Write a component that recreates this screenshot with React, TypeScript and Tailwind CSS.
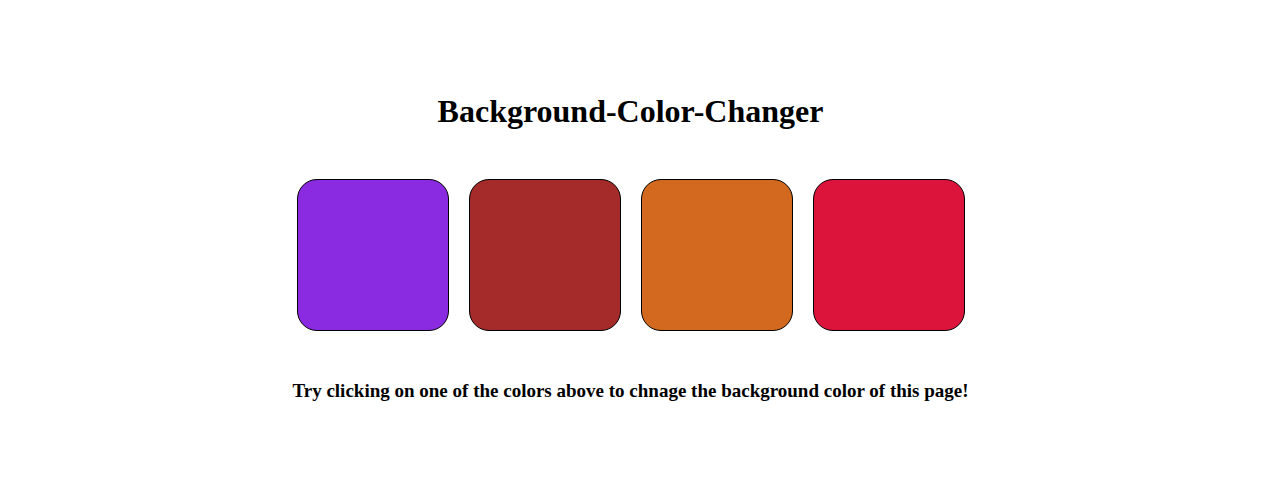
import { useState } from "react";

const swatches = [
  { name: "Blue violet", value: "#8a2be2", className: "bg-[#8a2be2]" },
  { name: "Brown", value: "#a52a2a", className: "bg-[#a52a2a]" },
  { name: "Chocolate", value: "#d2691e", className: "bg-[#d2691e]" },
  { name: "Crimson", value: "#dc143c", className: "bg-[#dc143c]" },
];

export default function App() {
  const [background, setBackground] = useState("#ffffff");

  return (
    <main
      className="flex min-h-screen flex-col items-center justify-center text-center font-['Liberation_Serif',serif] font-bold text-black"
      style={{ backgroundColor: background }}
    >
      <h1 className="text-[32px] leading-9">Background-Color-Changer</h1>
      <div className="mt-[50px] mb-12 flex flex-wrap justify-center gap-5">
        {swatches.map((swatch) => (
          <button
            key={swatch.value}
            type="button"
            aria-label={swatch.name}
            onClick={() => setBackground(swatch.value)}
            className={`size-[152px] cursor-pointer rounded-[20px] border border-black ${swatch.className}`}
          />
        ))}
      </div>
      <h2 className="text-[19px] leading-6">
        Try clicking on one of the colors above to chnage the background color of this page!
      </h2>
    </main>
  );
}
